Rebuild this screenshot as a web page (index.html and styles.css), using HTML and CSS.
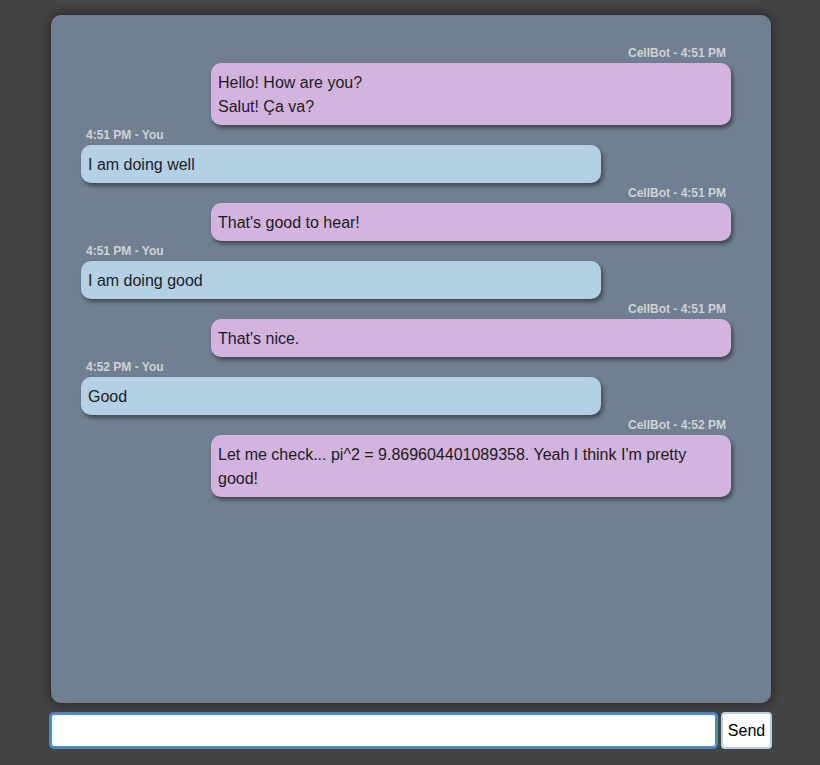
FILE: index.html
```html
<!DOCTYPE html>
<html>
<head>
<meta charset="utf-8">
<link rel="stylesheet" href="styles.css">
</head>
<body>
<div class="app">
  <div class="chat">
    <div class="msg bot">
      <div class="meta">CellBot - 4:51 PM</div>
      <div class="bubble">Hello! How are you?<br>Salut! Ça va?</div>
    </div>
    <div class="msg user">
      <div class="meta">4:51 PM - You</div>
      <div class="bubble">I am doing well</div>
    </div>
    <div class="msg bot">
      <div class="meta">CellBot - 4:51 PM</div>
      <div class="bubble">That's good to hear!</div>
    </div>
    <div class="msg user">
      <div class="meta">4:51 PM - You</div>
      <div class="bubble">I am doing good</div>
    </div>
    <div class="msg bot">
      <div class="meta">CellBot - 4:51 PM</div>
      <div class="bubble">That's nice.</div>
    </div>
    <div class="msg user">
      <div class="meta">4:52 PM - You</div>
      <div class="bubble">Good</div>
    </div>
    <div class="msg bot">
      <div class="meta">CellBot - 4:52 PM</div>
      <div class="bubble">Let me check... pi^2 = 9.869604401089358. Yeah I think I'm pretty good!</div>
    </div>
  </div>
  <form class="composer">
    <input class="field" type="text" autofocus>
    <button class="send" type="button">Send</button>
  </form>
</div>
</body>
</html>
```
FILE: styles.css
```css
html, body {
  margin: 0;
  padding: 0;
  background: #444444;
  font-family: "Liberation Sans", Arial, Helvetica, sans-serif;
}

.app {
  width: 720px;
  margin: 15px 0 0 51px;
}

.chat {
  height: 688px;
  box-sizing: border-box;
  background: #708090;
  border-radius: 10px;
  box-shadow: 0 0 12px rgba(0, 0, 0, 0.55);
  padding: 28px 40px 0 30px;
  display: flex;
  flex-direction: column;
}

.msg {
  display: flex;
  flex-direction: column;
  width: 520px;
}

.msg.bot {
  align-self: flex-end;
  align-items: flex-end;
}

.msg.user {
  align-self: flex-start;
  align-items: flex-start;
}

.meta {
  font-size: 12px;
  line-height: 14px;
  font-weight: bold;
  color: #cfd2d6;
  margin: 3px 5px;
}

.bubble {
  box-sizing: border-box;
  width: 520px;
  padding: 8px 7px 6px;
  font-size: 16px;
  line-height: 24px;
  color: #1c1c1c;
  border-radius: 10px;
  box-shadow: 2px 3px 4px rgba(0, 0, 0, 0.45);
}

.bot .bubble {
  background: #d2b4df;
}

.user .bubble {
  background: #b4d0e4;
}

.composer {
  display: flex;
  gap: 5px;
  margin: 9px -1px 0 0;
  align-items: center;
}

.field {
  flex: 1;
  height: 33px;
  box-sizing: border-box;
  margin: 0;
  border: 1px solid #4d8fd6;
  border-radius: 3px;
  box-shadow: 0 0 0 2px rgba(90, 155, 225, 0.75);
  outline: none;
  background: #ffffff;
  font-size: 16px;
  padding: 0 5px;
  font-family: "Liberation Sans", Arial, sans-serif;
}

.send {
  height: 37px;
  width: 51px;
  box-sizing: border-box;
  background: #ffffff;
  border: 2px solid #b6cfe3;
  border-radius: 4px;
  font-size: 16px;
  color: #000;
  padding: 0;
  font-family: "Liberation Sans", Arial, sans-serif;
}
```
